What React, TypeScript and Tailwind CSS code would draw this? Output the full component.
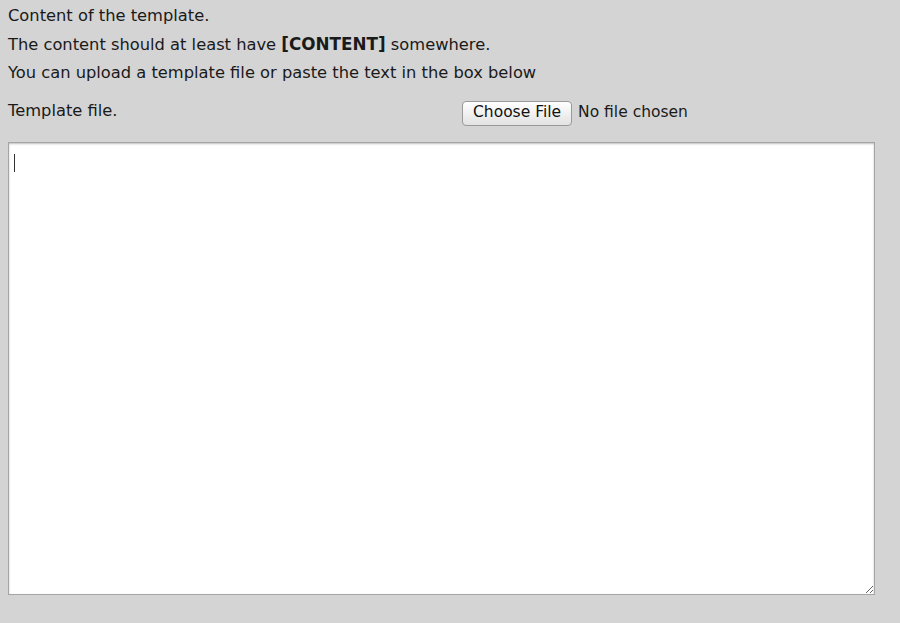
import React from 'react';

const App: React.FC = () => {
  return (
    <div className="min-h-[623px] w-[900px] bg-[#d4d4d4] text-[#1a1a1a] font-['DejaVu_Sans',Verdana,sans-serif] text-[16.3px]">
      <div className="px-2 pt-[2px]">
        <p className="leading-[28px]">Content of the template.</p>
        <p className="leading-[28px]">
          The content should at least have <b className="font-bold text-[16.8px]">[CONTENT]</b> somewhere.
        </p>
        <p className="leading-[28px]">You can upload a template file or paste the text in the box below</p>

        <div className="flex items-center mt-[10px] h-[30px]">
          <span className="w-[454px] -translate-y-[1px]">Template file.</span>
          <div className="flex items-center translate-y-[1px]">
            <button className="h-[25px] px-[10px] rounded-[4px] border border-[#9a9a9a] bg-gradient-to-b from-white to-[#e2e2e2] text-[15.5px] text-[#111] leading-none">
              Choose File
            </button>
            <span className="ml-[6px] text-[15.5px]">No file chosen</span>
          </div>
        </div>

        <div className="mt-[15px] relative w-[867px]">
          <textarea
            className="block w-[867px] h-[453px] bg-white border border-[#a5a5a5] shadow-[inset_0_1px_2px_rgba(0,0,0,0.25)] outline-none resize p-1"
            defaultValue=""
          />
          <div className="absolute left-[6px] top-[12px] w-[1px] h-[18px] bg-[#333]" />
        </div>
      </div>
    </div>
  );
};

export default App;
